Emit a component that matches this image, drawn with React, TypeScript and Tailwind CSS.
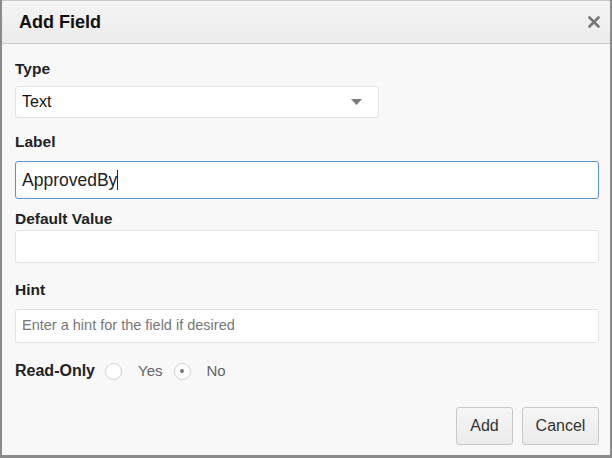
import React, { useState } from 'react';

export default function App() {
  const [readOnly, setReadOnly] = useState<'yes' | 'no'>('no');

  return (
    <div className="w-[612px] h-[458px] bg-[#8a8a8a] font-['Liberation_Sans',Arial,sans-serif] text-[#222]">
      <div className="ml-[2px] w-[608px] h-[455px] flex flex-col bg-[#f8f8f9] border-t border-[#c8c8c8]">
        {/* Header */}
        <div className="h-[43px] flex items-center justify-between pl-[17px] pr-[10px] bg-gradient-to-b from-[#f4f4f4] to-[#ececec] border-b border-[#c9ced4]">
          <h2 className="text-[18px] font-bold text-[#111]">Add Field</h2>
          <button className="text-[#777]" aria-label="Close">
            <svg width="12" height="12" viewBox="0 0 12 12">
              <path d="M1.5 1.5 L10.5 10.5 M10.5 1.5 L1.5 10.5" stroke="currentColor" strokeWidth="2.6" strokeLinecap="round" />
            </svg>
          </button>
        </div>

        {/* Body */}
        <div className="flex-1 flex flex-col pl-[13px] pr-[11px] pt-[15px]">
          <label className="text-[15.5px] font-bold leading-[20px]">Type</label>
          <div className="mt-[7px] w-[364px] h-[32px] flex items-center justify-between pl-[6px] pr-[16px] bg-white border border-[#e3e3e3] rounded-[3px]">
            <span className="text-[16px] text-[#111]">Text</span>
            <svg width="11" height="6" viewBox="0 0 11 6">
              <path d="M0 0 H11 L5.5 6 Z" fill="#7a7a7a" />
            </svg>
          </div>

          <label className="mt-[14px] text-[15.5px] font-bold leading-[20px]">Label</label>
          <div className="mt-[9px] h-[38px] flex items-center pl-[6px] bg-white border border-[#5b95d1] rounded-[3px]">
            <span className="text-[17.5px] text-[#222]">ApprovedBy</span>
            <span className="w-px h-[20px] bg-[#222]" />
          </div>

          <label className="mt-[10px] text-[15.5px] font-bold leading-[20px]">Default Value</label>
          <div className="mt-[1px] h-[33px] bg-white border border-[#e3e3e3] rounded-[3px]" />

          <label className="mt-[17px] text-[15.5px] font-bold leading-[20px]">Hint</label>
          <div className="mt-[9px] h-[34px] flex items-center pl-[6px] bg-white border border-[#e3e3e3] rounded-[3px]">
            <span className="text-[14.5px] text-[#777]">Enter a hint for the field if desired</span>
          </div>

          <div className="mt-[18px] h-[20px] flex items-center">
            <span className="text-[16px] font-bold">Read-Only</span>
            <button onClick={() => setReadOnly('yes')} className="ml-[10px] flex items-center">
              <span className="w-[17px] h-[17px] rounded-full border border-[#d2d2d2] bg-white flex items-center justify-center">
                {readOnly === 'yes' && <span className="w-[4px] h-[4px] rounded-full bg-[#777]" />}
              </span>
              <span className="ml-[16px] text-[15px] text-[#666]">Yes</span>
            </button>
            <button onClick={() => setReadOnly('no')} className="ml-[11px] flex items-center">
              <span className="w-[17px] h-[17px] rounded-full border border-[#d2d2d2] bg-white flex items-center justify-center">
                {readOnly === 'no' && <span className="w-[4px] h-[4px] rounded-full bg-[#777]" />}
              </span>
              <span className="ml-[16px] text-[15px] text-[#666]">No</span>
            </button>
          </div>

          <div className="mt-[26px] flex justify-end gap-[9px]">
            <button className="w-[57px] h-[38px] text-[16px] text-[#333] bg-gradient-to-b from-[#f6f6f6] to-[#ebebeb] border border-[#c8c8c8] rounded-[3px]">
              Add
            </button>
            <button className="w-[77px] h-[38px] text-[16px] text-[#333] bg-gradient-to-b from-[#f6f6f6] to-[#ebebeb] border border-[#c8c8c8] rounded-[3px]">
              Cancel
            </button>
          </div>
        </div>
      </div>
    </div>
  );
}
